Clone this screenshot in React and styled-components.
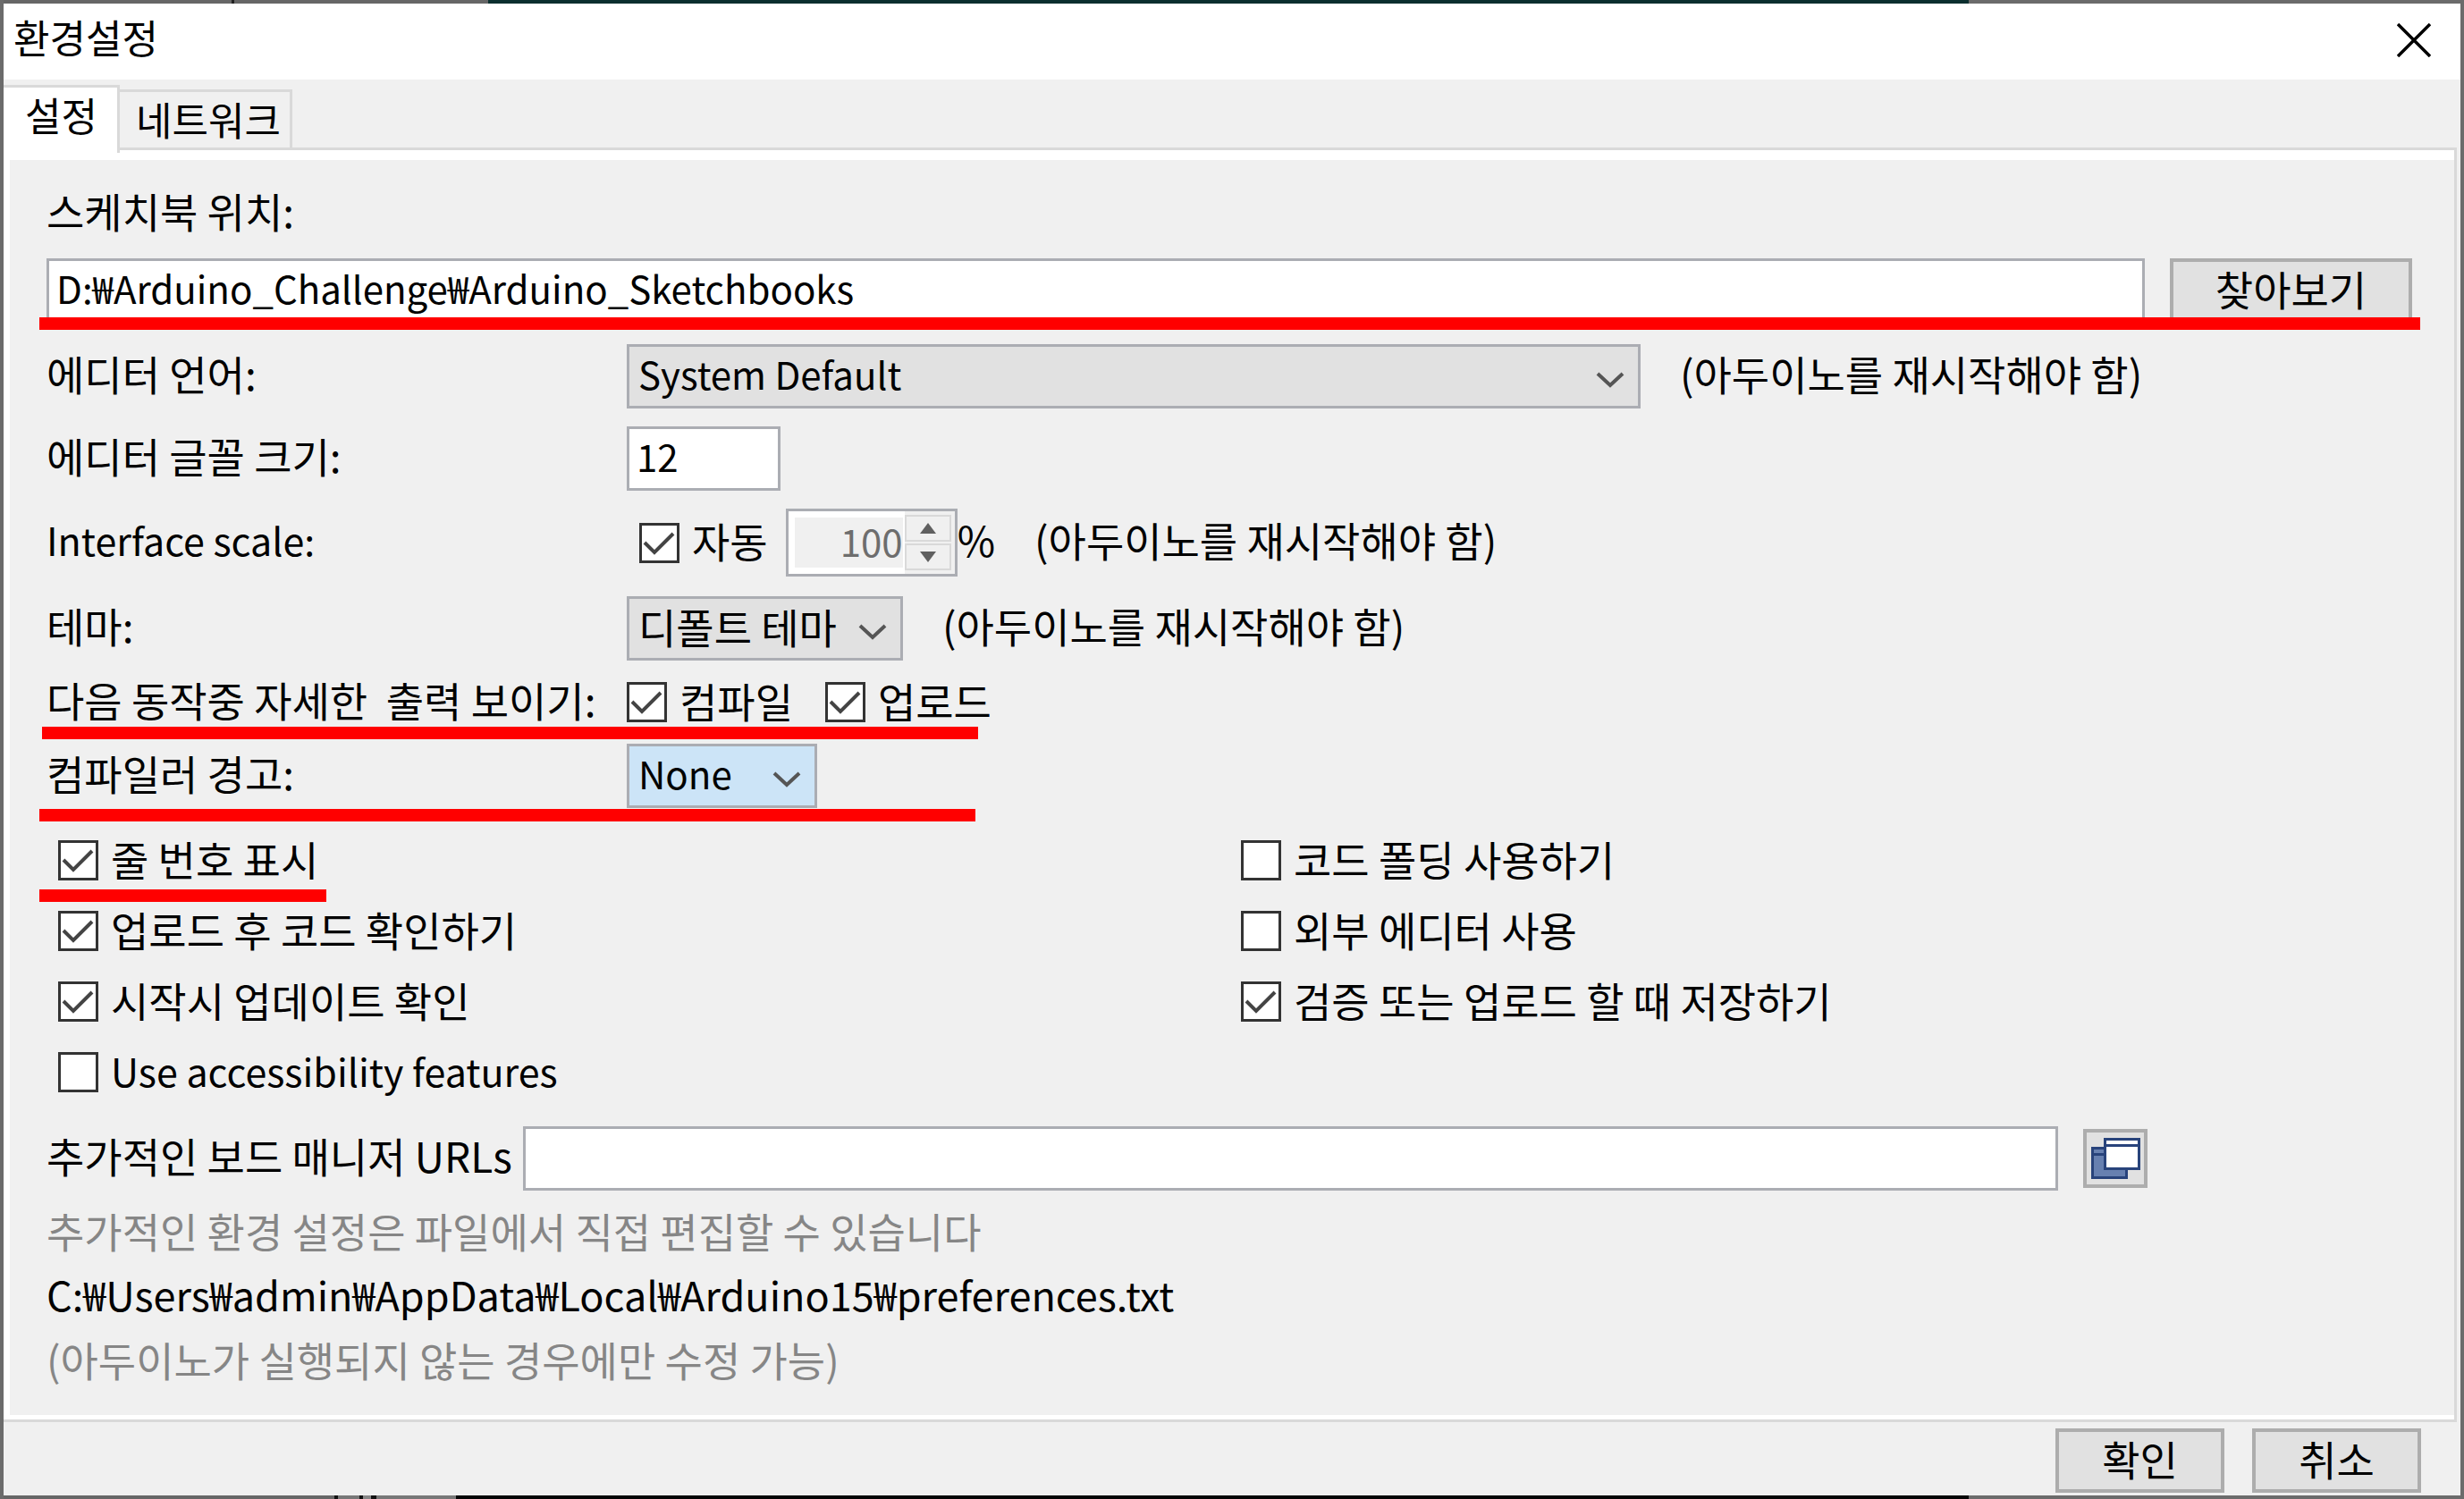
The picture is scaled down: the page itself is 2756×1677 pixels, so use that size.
import React, { useState } from "react";
import styled, { createGlobalStyle } from "styled-components";

const GlobalStyle = createGlobalStyle`
  *, *::before, *::after { box-sizing: border-box; }
  html, body { margin: 0; padding: 0; background: #f0f0f0; }
  body, button, input, select {
    font-family: "Noto Sans CJK KR", "Noto Sans", sans-serif;
    font-size: 46px;
    line-height: 72px;
    color: #000;
  }
`;

const Window = styled.div`
  display: flex;
  flex-direction: column;
  min-height: 100vh;
  background: #f0f0f0;
  border-left: 4px solid #6b6b6b;
  border-right: 4px solid #6b6b6b;
`;

const TopEdge = styled.div`
  height: 4px;
  background: linear-gradient(90deg, #666 0 255px, #222 255px 258px, #666 258px 542px, #0b2f2f 542px 80%, #6b6b6b 80%);
`;

const BottomEdge = styled.div`
  height: 4px;
  background: linear-gradient(90deg, #666 0 370px, #111 370px 374px, #777 374px 398px, #111 398px 402px, #888 402px 411px, #111 411px 417px, #777 417px 506px, #050505 506px 80%, #6b6b6b 80%);
`;

const TitleBar = styled.header`
  display: flex;
  align-items: center;
  justify-content: space-between;
  height: 85px;
  padding: 0 24px 4px 11px;
  background: #fff;
`;

const Title = styled.h1`
  margin: 0;
  padding-bottom: 8px;
  font-size: 44px;
  font-weight: 400;
  line-height: 72px;
`;

const CloseButton = styled.button`
  display: grid;
  place-items: center;
  width: 56px;
  height: 56px;
  padding: 0;
  border: 0;
  background: none;
`;

const Tabs = styled.div`
  display: flex;
  align-items: flex-end;
  height: 79px;
  padding-top: 4px;
  position: relative;
  z-index: 1;
`;

const Tab = styled.button`
  height: ${(p) => (p.$active ? 76 : 68)}px;
  margin-bottom: ${(p) => (p.$active ? -3 : 0)}px;
  padding: ${(p) => (p.$active ? "0 22px 16px 24px" : "0 10px 6px 18px")};
  border: 3px solid #d9d9d9;
  border-bottom-width: ${(p) => (p.$active ? 0 : 3)}px;
  border-left-width: 0;
  background: ${(p) => (p.$active ? "#fff" : "#f0f0f0")};
  font-size: 44px;
  line-height: 60px;
`;

const Panel = styled.main`
  flex: 1;
  display: flex;
  flex-direction: column;
  margin-right: 7px;
  padding: 24px 47px 12px 41px;
  background: #f0f0f0;
  border: solid #fff;
  border-width: 11px 0 5px 7px;
  box-shadow: 0 -3px #d9d9d9, 3px 0 #d9d9d9, 0 3px #d9d9d9, 3px 3px #d9d9d9, 3px -3px #d9d9d9;
`;

const Row = styled.div`
  position: relative;
  display: flex;
  align-items: center;
  height: ${(p) => p.$height || 72}px;
  margin-top: ${(p) => p.$gap || 0}px;
  padding-right: ${(p) => p.$inset || 0}px;
`;

const LabelCell = styled.label`
  flex: none;
  width: ${(p) => (p.$auto ? "auto" : "649px")};
  margin-right: ${(p) => (p.$auto ? 12 : 0)}px;
  padding-bottom: 8px;
  font-size: ${(p) => (p.$latin ? 43 : 46)}px;
  white-space: pre;
`;

const Hint = styled.span`
  margin-left: ${(p) => p.$gap}px;
  padding-bottom: 8px;
  white-space: nowrap;
`;

const Field = styled.input`
  flex: ${(p) => (p.$width ? "none" : "1")};
  min-width: 0;
  width: ${(p) => (p.$width ? p.$width + "px" : "auto")};
  height: 72px;
  padding: 0 8px 6px;
  border: 3px solid #abadb3;
  border-radius: 0;
  background: #fff;
  font-size: 42px;
  outline: 0;
`;

const PushButton = styled.button`
  flex: none;
  display: grid;
  place-items: center;
  width: ${(p) => p.$width}px;
  height: ${(p) => p.$height || 72}px;
  margin-left: ${(p) => p.$gap || 0}px;
  padding: ${(p) => (p.$height ? "0" : "0 0 6px")};
  border: 4px solid #adadad;
  background: #e1e1e1;
  line-height: 56px;
`;

const SelectBox = styled.div`
  position: relative;
  flex: 0 1 ${(p) => p.$width}px;
`;

const NativeSelect = styled.select`
  display: block;
  appearance: none;
  width: 100%;
  height: 72px;
  padding: 0 10px 6px;
  border: 3px solid #abadb3;
  border-radius: 0;
  background: ${(p) => (p.$hot ? "#cce4f7" : "#e1e1e1")};
  font-size: ${(p) => (p.$latin ? 42 : 46)}px;
  line-height: 60px;
  outline: 0;
`;

const Chevron = styled.svg`
  position: absolute;
  right: 18px;
  top: 30px;
  pointer-events: none;
`;

const CheckLabel = styled.label`
  display: inline-flex;
  align-items: center;
  gap: 14px;
  height: 45px;
  margin-left: ${(p) => p.$gap || 0}px;
  font-size: ${(p) => (p.$latin ? 43 : 46)}px;
  white-space: nowrap;
`;

const CheckText = styled.span`
  padding-bottom: 6px;
`;

const CheckFrame = styled.span`
  position: relative;
  flex: none;
  width: 45px;
  height: 45px;
`;

const CheckInput = styled.input`
  display: block;
  appearance: none;
  width: 45px;
  height: 45px;
  margin: 0;
  border: 3px solid #333;
  background: #fff;
`;

const CheckMark = styled.svg`
  position: absolute;
  inset: 0;
  pointer-events: none;
`;

const SpinBox = styled.div`
  display: flex;
  flex: none;
  width: 192px;
  height: 76px;
  margin-left: 20px;
  border: 3px solid #abadb3;
  background: #f0f0f0;
`;

const SpinInput = styled.input`
  width: 130px;
  height: 70px;
  padding: 0 0 6px;
  border: 7px solid #fff;
  border-right-width: 2px;
  border-radius: 0;
  background: #f0f0f0;
  color: #6d6d6d;
  font-size: 42px;
  line-height: 50px;
  text-align: right;
`;

const SpinButtons = styled.div`
  display: flex;
  flex-direction: column;
  gap: 2px;
  padding: 4px 0;
`;

const SpinButton = styled.button`
  display: grid;
  place-items: center;
  width: 52px;
  height: 30px;
  padding: 0;
  border: 2px solid #d9d9d9;
  background: #f0f0f0;
`;

const Options = styled.div`
  display: grid;
  grid-template-columns: 1fr 1fr;
  margin-top: 36px;
`;

const OptionColumn = styled.div`
  position: relative;
  display: flex;
  flex-direction: column;
  align-items: flex-start;
  gap: 34px;
  padding-left: 13px;
`;

const Note = styled.p`
  margin: 0;
  color: ${(p) => (p.$muted ? "#868686" : "#000")};
  font-size: ${(p) => (p.$latin ? 45 : 46)}px;
`;

const Notes = styled.div`
  margin-top: 8px;
`;

const Marker = styled.span`
  position: absolute;
  left: ${(p) => p.$left}px;
  top: ${(p) => p.$top}px;
  width: ${(p) => p.$width};
  height: 14px;
  background: #f00;
  pointer-events: none;
`;

const Footer = styled.footer`
  display: flex;
  justify-content: flex-end;
  gap: 31px;
  padding: 10px 44px 3px;
`;

function Select({ id, width, options, hot, latin }) {
  return (
    <SelectBox $width={width}>
      <NativeSelect id={id} $hot={hot} $latin={latin}>
        {options.map((o) => (
          <option key={o}>{o}</option>
        ))}
      </NativeSelect>
      <Chevron width="32" height="20" viewBox="0 0 32 20" fill="none" stroke="#555" strokeWidth="4">
        <path d="M2 3L16 16L30 3" />
      </Chevron>
    </SelectBox>
  );
}

function Check({ text, on = false, gap, latin }) {
  const [checked, setChecked] = useState(on);
  return (
    <CheckLabel $gap={gap} $latin={latin}>
      <CheckFrame>
        <CheckInput type="checkbox" checked={checked} onChange={() => setChecked(!checked)} />
        {checked && (
          <CheckMark width="45" height="45" viewBox="0 0 45 45" fill="none" stroke="#444" strokeWidth="4">
            <path d="M6 22L17 33L38 12" />
          </CheckMark>
        )}
      </CheckFrame>
      <CheckText>{text}</CheckText>
    </CheckLabel>
  );
}

const RESTART = "(아두이노를 재시작해야 함)";

export default function App() {
  return (
    <>
      <GlobalStyle />
      <Window>
        <TopEdge />
        <TitleBar>
          <Title>환경설정</Title>
          <CloseButton aria-label="닫기">
            <svg width="38" height="38" viewBox="0 0 38 38" stroke="#000" strokeWidth="3.5">
              <path d="M1 1L37 37M37 1L1 37" />
            </svg>
          </CloseButton>
        </TitleBar>
        <Tabs role="tablist">
          <Tab role="tab" aria-selected="true" $active>설정</Tab>
          <Tab role="tab" aria-selected="false">네트워크</Tab>
        </Tabs>
        <Panel>
          <Row>
            <LabelCell htmlFor="sketchbook">스케치북 위치:</LabelCell>
          </Row>
          <Row $gap={14}>
            <Field id="sketchbook" defaultValue="D:₩Arduino_Challenge₩Arduino_Sketchbooks" />
            <PushButton $width={271} $gap={28}>찾아보기</PushButton>
            <Marker $left={-8} $top={66} $width="calc(100% + 17px)" />
          </Row>
          <Row $gap={24}>
            <LabelCell htmlFor="language">에디터 언어:</LabelCell>
            <Select id="language" width={1134} options={["System Default"]} latin />
            <Hint $gap={44}>{RESTART}</Hint>
          </Row>
          <Row $gap={20}>
            <LabelCell htmlFor="fontsize">에디터 글꼴 크기:</LabelCell>
            <Field id="fontsize" $width={172} defaultValue="12" />
          </Row>
          <Row $gap={20} $height={76}>
            <LabelCell htmlFor="scale" $latin>Interface scale:</LabelCell>
            <Check text="자동" on gap={14} />
            <SpinBox>
              <SpinInput id="scale" defaultValue="100" disabled />
              <SpinButtons>
                <SpinButton disabled aria-label="증가">
                  <svg width="18" height="12" viewBox="0 0 18 12" fill="#606060"><path d="M9 0L18 12H0Z" /></svg>
                </SpinButton>
                <SpinButton disabled aria-label="감소">
                  <svg width="18" height="12" viewBox="0 0 18 12" fill="#606060"><path d="M9 12L18 0H0Z" /></svg>
                </SpinButton>
              </SpinButtons>
            </SpinBox>
            <Hint $gap={0}>%</Hint>
            <Hint $gap={44}>{RESTART}</Hint>
          </Row>
          <Row $gap={22}>
            <LabelCell htmlFor="theme">테마:</LabelCell>
            <Select id="theme" width={309} options={["디폴트 테마"]} />
            <Hint $gap={44}>{RESTART}</Hint>
          </Row>
          <Row $gap={24} $height={45}>
            <LabelCell as="span">{"다음 동작중 자세한  출력 보이기:"}</LabelCell>
            <Check text="컴파일" on />
            <Check text="업로드" on gap={36} />
            <Marker $left={-5} $top={50} $width="1047px" />
          </Row>
          <Row $gap={24}>
            <LabelCell htmlFor="warnings">컴파일러 경고:</LabelCell>
            <Select id="warnings" width={213} options={["None"]} hot latin />
            <Marker $left={-8} $top={73} $width="1047px" />
          </Row>
          <Options>
            <OptionColumn>
              <Check text="줄 번호 표시" on />
              <Check text="업로드 후 코드 확인하기" on />
              <Check text="시작시 업데이트 확인" on />
              <Check text="Use accessibility features" latin />
              <Marker $left={-8} $top={55} $width="321px" />
            </OptionColumn>
            <OptionColumn>
              <Check text="코드 폴딩 사용하기" />
              <Check text="외부 에디터 사용" />
              <Check text="검증 또는 업로드 할 때 저장하기" on />
            </OptionColumn>
          </Options>
          <Row $gap={38} $inset={296}>
            <LabelCell htmlFor="urls" $auto>추가적인 보드 매니저 URLs</LabelCell>
            <Field id="urls" />
            <PushButton $width={72} $height={66} $gap={28} aria-label="URL 목록 편집">
              <svg width="58" height="50" viewBox="0 0 58 50" stroke="#28437b" strokeWidth="3">
                <path d="M3.500 13.500H41.500V46.500H3.500Z" fill="#6780b0" />
                <path d="M3.500 20.500H20" />
                <path d="M17.500 3.500H55.500V36.500H17.500Z" fill="#fff" />
                <path d="M17.500 10.500H55.500" />
              </svg>
            </PushButton>
          </Row>
          <Notes>
            <Note $muted>추가적인 환경 설정은 파일에서 직접 편집할 수 있습니다</Note>
            <Note $latin>C:₩Users₩admin₩AppData₩Local₩Arduino15₩preferences.txt</Note>
            <Note $muted>(아두이노가 실행되지 않는 경우에만 수정 가능)</Note>
          </Notes>
        </Panel>
        <Footer>
          <PushButton $width={189}>확인</PushButton>
          <PushButton $width={189}>취소</PushButton>
        </Footer>
        <BottomEdge />
      </Window>
    </>
  );
}
